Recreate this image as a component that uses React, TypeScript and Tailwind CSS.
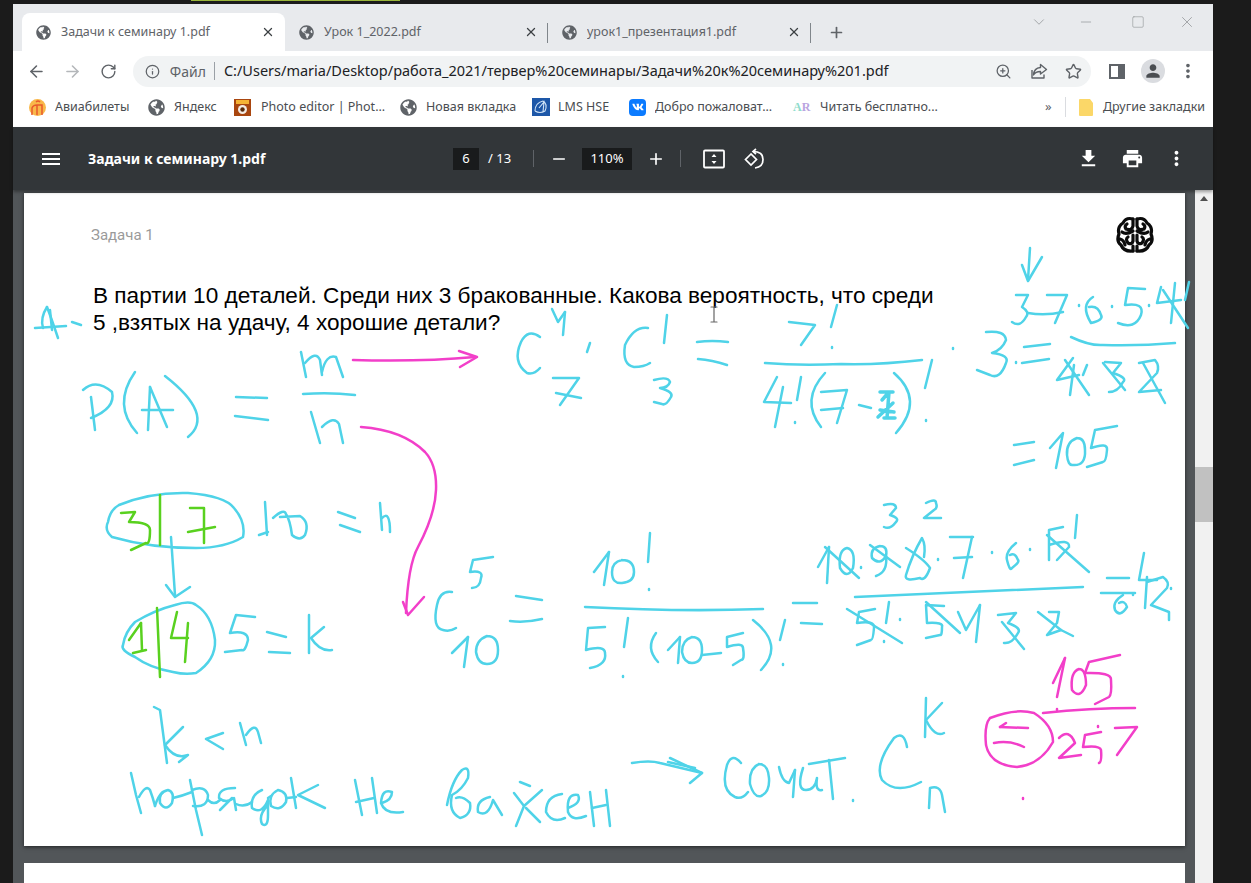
import React from 'react';
import { ArrowLeft, ArrowRight, RotateCw, Info, ZoomIn, Star, X, Plus, Minus, ChevronDown, Square } from 'lucide-react';
import { FaGlobeAmericas, FaVk } from 'react-icons/fa';
import { MdFileDownload, MdPrint, MdMoreVert, MdPerson, MdMenu } from 'react-icons/md';

const cyan = [
  // A-
  'M47 307 Q40 318 43 328', 'M47 307 Q52 320 58 338', 'M50 310 L52 330', 'M35 328 L66 326', 'M72 322 L81 325',
  // P(A) =
  'M91 397 L95 430', 'M83 390 Q96 378 112 392 Q116 408 91 418', 'M135 372 Q112 405 137 433',
  'M150 387 L148 430', 'M150 387 L167 427', 'M142 410 L173 410', 'M165 376 Q215 415 188 437',
  'M236 397 L267 398', 'M235 416 L268 420',
  // m/n
  'M301 352 L306 377', 'M305 363 Q316 350 320 360 L322 375', 'M322 372 Q326 354 336 357 L343 377',
  'M303 394 Q330 392 355 395', 'M311 412 L320 443', 'M322 427 Q334 415 339 424 L343 443',
  // C 4 7
  'M540 337 Q528 328 521 342 Q512 362 527 373 Q534 375 540 368',
  'M552 309 L558 322 L565 312', 'M565 312 L563 335',
  'M553 378 L579 378 L560 405', 'M556 393 L581 398', 'M590 343 L587 352',
  // C 1 3 =
  'M648 328 Q634 326 625 345 Q622 365 634 367 Q644 367 650 363', 'M667 315 L664 343',
  'M654 380 Q668 376 670 382 Q668 388 660 388 Q674 392 671 397 Q666 406 662 404 L654 402',
  'M697 342 Q712 340 728 342', 'M698 359 Q712 360 727 365',
  // 7! / 4!(7-4)!
  'M789 322 L815 325 L801 345', 'M837 305 L831 327', 'M832 347 L832 348',
  'M765 363 Q800 366 841 364 Q880 365 922 360', 'M932 360 L925 388', 'M926 420 L926 421',
  'M777 377 L764 402 L791 403', 'M783 387 L775 427', 'M801 377 L797 400', 'M795 422 L795 423',
  'M825 373 Q800 400 821 427', 'M821 392 L847 390 L837 423', 'M821 410 L843 408', 'M859 405 L871 408',
  'M894 373 Q925 400 896 433', 'M953 348 L953 349',
  // 3 =
  'M986 332 Q1005 330 1006 340 Q1002 350 992 353 Q1010 355 1006 363 Q1000 380 990 375 L977 370',
  'M1024 347 L1050 344', 'M1022 363 L1049 359', 'M1016 362 L1016 363',
  // arrow
  'M1030 248 L1028 280', 'M1022 265 L1028 281 L1042 257',
  // numerator
  'M1016 295 L1028 295 L1022 307 Q1030 312 1026 317 Q1020 328 1012 322',
  'M1047 295 L1067 295 L1055 323', 'M1028 313 Q1045 316 1063 312', 'M1079 305 L1079 306',
  'M1093 297 Q1080 305 1091 323 Q1104 320 1101 315 Q1098 305 1089 307', 'M1112 306 L1112 307',
  'M1145 289 L1128 288 L1125 305 Q1145 302 1141 315 Q1135 330 1118 323', 'M1149 305 L1149 306',
  'M1161 287 L1157 303 L1181 300', 'M1175 283 L1171 323', 'M1163 290 L1188 328', 'M1189 282 L1185 300',
  'M1071 337 Q1090 346 1103 345 Q1140 346 1175 343',
  // denominator
  'M1073 358 L1057 380 L1079 375', 'M1074 365 L1070 395', 'M1065 360 L1089 395', 'M1087 365 L1083 375',
  'M1105 362 L1121 363 L1113 373 Q1128 378 1123 382 Q1118 392 1109 392', 'M1103 363 L1125 390',
  'M1139 363 L1155 360 Q1160 366 1157 373 L1139 392 L1161 390', 'M1143 363 L1165 403',
  // =105
  'M1014 445 L1034 442', 'M1014 465 L1034 460', 'M1050 448 L1063 433 L1056 468',
  'M1077 438 Q1066 442 1067 455 Q1068 466 1073 465 Q1086 466 1085 450 Q1085 438 1077 438',
  'M1117 426 L1095 430 L1091 448 Q1108 442 1107 450 Q1106 462 1103 462 L1087 467',
  // 10 = n
  'M119 505 Q150 492 188 493 Q225 496 234 508 Q246 522 243 537 Q225 548 196 548 Q150 548 112 537 Q104 530 108 522 Q110 510 119 505',
  'M265 502 L267 535', 'M259 535 L268 532', 'M273 518 Q284 508 286 514 Q290 520 292 535 Q300 542 305 535 Q310 522 300 516 L280 517',
  'M338 512 L355 518', 'M340 525 L360 532', 'M380 503 L382 530', 'M382 518 Q390 510 390 532',
  'M171 537 L175 595', 'M166 585 L175 597 L190 587',
  // 5 = k
  'M175 605 Q190 600 196 605 Q212 615 215 640 Q216 660 196 673 Q185 675 173 672 Q150 668 135 657 Q120 650 123 645 Q125 632 135 622 Q155 610 175 605',
  'M255 617 L236 615 L230 633 Q248 630 248 640 Q245 652 242 650 L225 652', 'M267 632 L286 637', 'M269 652 L290 653',
  'M309 615 L309 653', 'M324 627 L311 638 Q320 652 332 650',
  // C 5 10
  'M452 592 Q440 590 437 605 Q432 628 443 630 Q450 632 456 628',
  'M493 557 L473 560 L470 572 Q484 570 481 578 Q480 588 472 588',
  'M468 637 L452 653', 'M468 637 L464 667', 'M487 636 Q476 640 476 652 Q478 664 487 664 Q498 664 498 650 Q498 636 487 636',
  'M516 596 L542 600', 'M510 621 Q525 623 542 619',
  // 10!/5!(10-5)!
  'M609 552 L594 572', 'M609 552 L604 585', 'M622 560 Q612 562 612 572 Q612 584 622 583 Q634 582 634 572 Q634 560 622 560',
  'M650 533 L648 562', 'M649 589 L649 590', 'M585 607 Q680 612 763 609',
  'M605 627 L588 628 L586 650 Q605 645 605 653 Q607 665 590 668', 'M628 618 L624 647', 'M623 676 L623 677',
  'M656 633 Q645 648 658 662', 'M680 637 L668 650', 'M680 637 L678 663',
  'M692 637 Q682 640 682 652 Q684 663 692 663 Q702 663 702 650 Q702 637 692 637', 'M702 655 L721 653',
  'M743 633 L727 637 L727 647 Q743 642 743 648 Q745 660 741 660 L733 665',
  'M753 620 Q785 645 761 670', 'M785 620 L780 640', 'M783 664 L783 665',
  'M793 603 L817 603', 'M801 623 L822 624',
  // big numerator
  'M884 505 Q896 502 896 508 L890 515 Q900 518 896 522 Q890 530 884 527',
  'M926 503 Q936 498 936 503 Q938 508 934 510 L924 518 L941 518',
  'M829 547 L818 567', 'M829 547 L827 583', 'M847 548 Q838 550 840 568 Q847 580 853 568 Q856 550 847 548', 'M825 547 L859 578', 'M861 567 L861 568',
  'M880 546 Q870 548 872 558 Q880 566 886 556 Q888 546 880 546', 'M886 556 Q888 572 876 576', 'M870 545 L900 567',
  'M906 548 Q925 560 930 568 Q925 582 920 578 Q904 582 906 575 Q912 555 922 538 Q926 545 924 557', 'M938 559 L938 560',
  'M950 537 L973 537', 'M972 537 L963 578', 'M954 558 L972 557', 'M992 552 L992 553',
  'M1016 543 Q1005 552 1007 560 Q1010 572 1012 568 Q1020 562 1018 560 Q1015 552 1010 555', 'M1030 549 L1030 550',
  'M1063 527 L1049 530 L1049 560 M1049 545 Q1070 538 1069 547 L1057 560', 'M1047 535 L1089 572', 'M1077 515 L1075 538',
  'M1107 578 L1129 578', 'M1101 593 L1135 593', 'M1123 595 Q1112 602 1115 610 Q1120 618 1127 607 Q1125 600 1119 603', 'M1133 594 L1133 595',
  'M1144 553 L1139 580 L1157 580', 'M1147 577 L1145 608', 'M1147 582 L1163 577 Q1170 582 1167 588 L1151 605 L1169 612 L1169 620', 'M1171 588 L1171 589',
  'M855 597 Q960 592 1083 587',
  // big denominator
  'M875 609 L859 612 L857 623 Q875 620 874 628 Q873 640 871 640 L857 645', 'M847 609 L902 643', 'M889 602 L886 623', 'M900 619 L900 620', 'M884 641 L884 642',
  'M944 606 L926 605 L927 623 Q944 622 942 627 Q942 636 940 635 L926 638', 'M926 602 L960 633', 'M958 612 L966 630 L980 605', 'M980 605 L976 642',
  'M998 615 L1016 613 L1008 623 Q1022 628 1018 633 Q1012 644 1004 643', 'M1002 622 L1024 649',
  'M1049 612 L1059 612 L1057 623 L1047 635 L1061 630 L1073 636', 'M1038 612 L1061 630',
  // k < n
  'M154 707 L160 710 L167 763', 'M183 727 L165 745 Q175 760 188 755 L179 762', 'M223 733 L206 739 L223 749',
  'M240 723 L246 745', 'M246 735 Q255 722 258 732 L261 743',
  // порядок не важен
  'M131 773 L136 795 L141 813', 'M139 797 Q146 784 150 790 Q153 798 155 806',
  'M168 790 Q158 792 160 803 Q166 812 172 803 Q175 792 168 790',
  'M190 780 L196 810 L202 835', 'M192 790 Q205 785 208 795 Q208 808 193 806',
  'M235 788 Q218 788 219 798 Q226 804 234 798 L236 810 M232 798 L220 810',
  'M262 790 Q250 795 252 808 Q262 815 268 800 L268 815 Q268 828 262 824 Q258 815 268 805',
  'M278 790 Q268 795 271 806 Q280 812 286 802 Q288 792 278 790',
  'M291 778 L296 808', 'M318 785 L298 795 L325 808',
  'M155 806 Q158 796 163 792', 'M173 798 Q182 796 192 792', 'M208 800 Q214 806 220 800', 'M236 804 Q244 808 252 802', 'M268 798 L271 796', 'M287 798 L296 797',
  'M355 780 L362 815', 'M356 802 L374 798', 'M372 778 L377 813', 'M382 803 Q392 800 392 792 Q382 788 381 803 Q385 815 403 812',
  'M447 805 Q452 780 462 770 Q470 765 468 778 Q462 790 452 795 Q448 812 460 818 Q472 815 470 803 Q462 795 456 798',
  'M490 797 Q476 800 478 812 Q488 818 493 800 L502 815',
  'M514 793 L524 806 L516 826', 'M524 806 L542 790 M526 808 L540 822', 'M520 782 L530 786',
  'M562 794 Q546 796 546 812 Q552 824 565 818',
  'M568 808 Q582 803 578 795 Q566 793 568 812 Q572 822 586 816',
  'M590 792 L594 826', 'M592 808 L606 805', 'M606 790 L610 826',
  // стрелка, сочет.
  'M632 763 Q650 760 660 763 L702 773', 'M670 758 L702 773 L690 783', 'M668 762 L695 768',
  'M741 763 Q732 752 727 765 Q720 790 735 797 Q742 800 748 792',
  'M759 764 Q749 768 750 784 Q754 798 761 796 Q770 792 769 778 Q768 764 759 764',
  'M779 767 Q782 782 789 783 L795 770', 'M795 770 L793 797',
  'M803 768 Q796 790 806 790 Q815 790 817 778 Q815 792 822 790',
  'M809 764 L845 758', 'M829 760 L833 799', 'M853 800 L853 801',
  'M907 747 Q904 730 894 738 Q874 765 882 780 Q896 795 921 782',
  'M926 698 L925 737', 'M942 703 L926 720 Q935 738 944 733',
  'M929 808 L930 788 Q940 785 942 795 L945 812',
];

const green = [
  'M160 495 L160 545', 'M121 513 L135 512 L129 522 Q150 522 150 530 Q150 545 146 543 L131 550',
  'M190 508 L204 508 L204 543', 'M188 532 L215 527',
  'M157 608 L160 677', 'M141 623 L129 640', 'M141 623 L142 650', 'M133 653 L146 650',
  'M177 612 L171 638 L188 638', 'M188 623 L185 662',
];

const magenta = [
  'M353 360 Q420 362 475 357', 'M459 351 L477 357 L460 367',
  'M361 427 Q403 430 425 452 Q437 465 436 490 Q435 515 418 547 Q408 565 406 613',
  'M403 602 L408 615 L424 597',
  'M1065 658 L1053 683', 'M1065 658 L1057 697',
  'M1079 669 Q1070 672 1072 690 Q1080 700 1086 685 Q1086 669 1079 669',
  'M1120 655 L1089 662 L1085 673 Q1112 672 1111 680 Q1112 695 1109 697 L1095 704',
  'M1043 713 Q1090 708 1135 708', 'M1057 709 L1057 710',
  'M990 718 Q1015 708 1034 713 Q1053 725 1053 742 Q1040 765 1017 767 Q990 765 986 745 Q984 725 990 718',
  'M1000 727 L1028 728', 'M994 743 Q1010 740 1024 747', 'M1000 727 L1006 723',
  'M1059 738 Q1069 728 1075 743 L1059 758 L1081 755',
  'M1101 732 L1085 735 L1083 747 Q1100 745 1101 750 Q1102 762 1099 763',
  'M1115 728 L1137 727 L1117 755', 'M1098 726 L1098 727', 'M1023 798 L1023 799',
];

function Handwriting() {
  return (
    <svg
      className="absolute inset-0 overflow-visible"
      width="1161"
      height="653"
      viewBox="24 193 1161 653"
      fill="none"
      strokeLinecap="round"
      strokeLinejoin="round"
    >
      <g stroke="#4fd3e8" strokeWidth="2.5">
        {cyan.map((d) => <path key={d} d={d} />)}
        <path d="M880 392 L893 392 M884 418 L895 418 M882 400 L889 392 L887 418 M880 410 L894 412 M878 417 L893 403" strokeWidth="3.5" />
      </g>
      <g stroke="#59d11f" strokeWidth="2.5">
        {green.map((d) => <path key={d} d={d} />)}
      </g>
      <g stroke="#f23fc9" strokeWidth="2.5">
        {magenta.map((d) => <path key={d} d={d} />)}
      </g>
      <path d="M711 307 H717 M714 307 V322 M711 322 H717" stroke="#666" strokeWidth="1.2" />
    </svg>
  );
}

const brainHalf = (
  <g stroke="#0b0b0b" strokeWidth="3.2" strokeLinecap="round" strokeLinejoin="round" fill="none">
    <path d="M17 3 Q10 1 7 7 Q1 11 3 18 Q0 25 5 29 Q8 36 17 35" />
    <path d="M17 3 V10 Q16 15 10 13 Q8 10 11 8" />
    <path d="M17 15 Q10 19 6 16" />
    <path d="M17 19 V25 Q16 29 12 27 Q9 23 12 21" />
    <path d="M17 30 V35" />
    <path d="M4 23 Q8 24 9 29" />
  </g>
);

function BrainLogo() {
  return (
    <svg width="38" height="38" viewBox="0 0 38 38" fill="none">
      {brainHalf}
      <g transform="translate(38 0) scale(-1 1)">{brainHalf}</g>
    </svg>
  );
}

function Tab({ title, active, divider }: { title: string; active?: boolean; divider?: boolean }) {
  return (
    <div className={`relative flex h-[38px] w-[263px] items-center rounded-t-lg pl-[14px] pr-[10px] ${active ? 'bg-white' : ''}`}>
      <FaGlobeAmericas className="h-[15px] w-[15px] shrink-0 text-[#5f6368]" />
      <span className="ml-[10px] flex-1 truncate text-[12.5px] text-[#5f6368]">{title}</span>
      <X className="h-[14px] w-[14px] text-[#3c4043]" strokeWidth={2.2} />
      {divider && <span className="absolute right-0 top-[10px] h-[20px] w-px bg-[#80868b]" />}
    </div>
  );
}

function Bookmark({ icon, label, className }: { icon: React.ReactNode; label: string; className: string }) {
  return (
    <div className={`flex items-center ${className}`}>
      {icon}
      <span className="truncate text-[12.5px] text-[#4a4d51]">{label}</span>
    </div>
  );
}

const globe = <FaGlobeAmericas className="mr-[9px] h-[17px] w-[17px] shrink-0 text-[#5f6368]" />;

export default function App() {
  return (
    <div className="flex h-[883px] w-[1251px] flex-col overflow-hidden bg-[#1b1b1b] pl-[13px] pr-[38px] font-['Noto_Sans',sans-serif]">
      <div className="h-[4px] shrink-0">
        <div className="ml-[178px] h-px w-[209px] bg-[#9ab53a]" />
      </div>

      <div className="flex min-h-0 flex-1 flex-col">
        {/* tab strip */}
        <div className="flex h-[47px] shrink-0 items-end bg-[#e8eaed] pl-[9px]">
          <Tab title="Задачи к семинару 1.pdf" active />
          <Tab title="Урок 1_2022.pdf" divider />
          <Tab title="урок1_презентация1.pdf" divider />
          <div className="flex h-[38px] items-center pl-[17px]">
            <Plus className="h-[17px] w-[17px] text-[#5f6368]" strokeWidth={2.4} />
          </div>
          <div className="ml-auto flex h-[38px] -translate-y-[10px] items-center pr-[17px] text-[#8d9093]">
            <ChevronDown className="h-[18px] w-[18px]" strokeWidth={1} />
            <Minus className="ml-[30px] h-[16px] w-[16px]" strokeWidth={1} />
            <Square className="ml-[37px] h-[14px] w-[14px]" strokeWidth={1} />
            <X className="ml-[33px] h-[18px] w-[18px]" strokeWidth={1} />
          </div>
        </div>

        {/* address row */}
        <div className="flex h-[40px] shrink-0 items-center bg-white pl-[14px] pr-[14px]">
          <ArrowLeft className="h-[19px] w-[19px] text-[#5f6368]" strokeWidth={2} />
          <ArrowRight className="ml-[17px] h-[19px] w-[19px] text-[#b4b7ba]" strokeWidth={2} />
          <RotateCw className="ml-[18px] h-[17px] w-[17px] text-[#5f6368]" strokeWidth={2} />
          <div className="ml-[16px] flex h-[31px] w-[962px] items-center rounded-full bg-[#f1f3f4] pl-[12px] pr-[9px]">
            <Info className="h-[15px] w-[15px] text-[#5f6368]" strokeWidth={2} />
            <span className="ml-[10px] text-[14px] text-[#5f6368]">Файл</span>
            <span className="ml-[8px] h-[18px] w-px bg-[#9aa0a6]" />
            <span className="ml-[9px] text-[14.5px] text-[#202124]">C:/Users/maria/Desktop/работа_2021/тервер%20семинары/Задачи%20к%20семинару%201.pdf</span>
            <ZoomIn className="ml-auto h-[17px] w-[17px] text-[#5f6368]" strokeWidth={1.8} />
            <svg className="ml-[18px] h-[18px] w-[18px] text-[#5f6368]" viewBox="0 0 18 18" fill="none" stroke="currentColor" strokeWidth="1.4" strokeLinejoin="round">
              <path d="M10.5 2.5 L16.5 7.5 L10.5 12 V9.5 Q5.5 9.5 3.5 13 Q4 6 10.5 5.5 Z" />
              <path d="M2 8 V16 H14 V12.5" />
            </svg>
            <Star className="ml-[17px] h-[17px] w-[17px] text-[#5f6368]" strokeWidth={2} />
          </div>
          <div className="ml-[18px] flex h-[15px] w-[16px] border-2 border-[#5f6368]">
            <div className="ml-auto h-full w-[5px] bg-[#5f6368]" />
          </div>
          <div className="ml-[16px] flex h-[24px] w-[24px] items-center justify-center rounded-full bg-[#dadce0]">
            <MdPerson className="h-[20px] w-[20px] text-[#4a4d51]" />
          </div>
          <MdMoreVert className="ml-[12px] h-[22px] w-[22px] text-[#5f6368]" />
        </div>

        {/* bookmarks */}
        <div className="flex h-[36px] shrink-0 items-center bg-white pb-[4px] pl-[16px] text-[#4a4d51]">
          <Bookmark
            className="w-[119px]"
            label="Авиабилеты"
            icon={
              <svg className="mr-[9px] h-[17px] w-[17px] shrink-0" viewBox="0 0 17 17">
                <circle cx="8.5" cy="8.5" r="8.5" fill="#f9b84a" />
                <path d="M3 16 V9 Q4 6 8 6 H13 V16 M8 6 V16 M7 3 Q9 1 11 3" fill="none" stroke="#e85a2c" strokeWidth="1.5" />
              </svg>
            }
          />
          <Bookmark className="w-[86px]" label="Яндекс" icon={globe} />
          <Bookmark
            className="w-[166px]"
            label="Photo editor | Phot..."
            icon={
              <svg className="mr-[10px] h-[17px] w-[17px] shrink-0" viewBox="0 0 17 17">
                <rect width="17" height="17" fill="#a9460f" />
                <rect x="2" y="1" width="13" height="4" fill="#f5b335" />
                <circle cx="8.5" cy="10.5" r="4.5" fill="#f4ece4" />
                <circle cx="8.5" cy="10.5" r="2.2" fill="#5a2a0a" />
              </svg>
            }
          />
          <Bookmark className="w-[132px]" label="Новая вкладка" icon={globe} />
          <Bookmark
            className="w-[97px]"
            label="LMS HSE"
            icon={
              <svg className="mr-[8px] h-[18px] w-[18px] shrink-0" viewBox="0 0 18 18" fill="none">
                <rect width="18" height="18" fill="#1d57a8" />
                <path d="M3 13 Q3 5 11 3 Q16 6 13 13 Q8 16 3 13 M7 10 L12 4 L11 14" stroke="#cfe3f7" strokeWidth="1.1" />
              </svg>
            }
          />
          <Bookmark
            className="w-[164px]"
            label="Добро пожаловат..."
            icon={
              <div className="mr-[9px] flex h-[17px] w-[17px] shrink-0 items-center justify-center rounded-[4px] bg-[#0b7bff] text-white">
                <FaVk className="h-[12px] w-[12px]" />
              </div>
            }
          />
          <Bookmark
            className="w-[252px]"
            label="Читать бесплатно..."
            icon={
              <span className="mr-[10px] w-[17px] shrink-0 font-['Liberation_Serif',serif] text-[12px] font-bold">
                <span className="text-[#8fdccb]">A</span>
                <span className="text-[#b9a4e0]">R</span>
              </span>
            }
          />
          <span className="w-[16px] text-[13px] text-[#5f6368]">»</span>
          <span className="ml-[4px] h-[20px] w-px bg-[#dadce0]" />
          <svg className="ml-[13px] h-[17px] w-[14px] shrink-0" viewBox="0 0 14 17">
            <path d="M0 1 Q0 0 1 0 H11 L14 4 V16 Q14 17 13 17 H1 Q0 17 0 16 Z" fill="#fbd768" />
          </svg>
          <span className="ml-[10px] whitespace-nowrap text-[12.5px]">Другие закладки</span>
        </div>

        {/* pdf toolbar */}
        <div className="relative z-10 flex h-[63px] shrink-0 items-center bg-[#323639] pl-[26px] text-white shadow-[0_2px_3px_rgba(0,0,0,0.35)]">
          <MdMenu className="h-[24px] w-[24px]" />
          <div className="ml-[25px] w-[365px] truncate text-[14px] font-bold">Задачи к семинару 1.pdf</div>
          <div className="flex h-[22px] w-[26px] items-center justify-center bg-[#191b1c] text-[13px]">6</div>
          <span className="ml-[9px] w-[45px] text-[13px]">/ 13</span>
          <span className="h-[17px] w-px bg-[#5f6368]" />
          <Minus className="ml-[16px] h-[18px] w-[18px]" strokeWidth={2.2} />
          <div className="ml-[14px] flex h-[22px] w-[50px] items-center justify-center bg-[#191b1c] text-[13px]">110%</div>
          <Plus className="ml-[15px] h-[18px] w-[18px]" strokeWidth={2.2} />
          <span className="ml-[15px] h-[17px] w-px bg-[#5f6368]" />
          <svg className="ml-[22px] h-[20px] w-[22px]" viewBox="0 0 22 20" fill="none" stroke="#fff" strokeWidth="1.8">
            <rect x="1" y="1.5" width="20" height="17" rx="1" />
            <path d="M11 5 L13.5 8 H8.5 Z M11 15 L13.5 12 H8.5 Z" fill="#fff" stroke="none" />
          </svg>
          <svg className="ml-[18px] h-[22px] w-[22px]" viewBox="0 0 22 22" fill="none" stroke="#fff" strokeWidth="1.7">
            <path d="M8 6 L2.5 11.5 L8 17 L13.5 11.5 Z" />
            <path d="M10 3.5 Q20 3.5 20 11.5 Q20 19 12 20" />
            <path d="M13 1 L10 3.5 L13 6" />
          </svg>
          <MdFileDownload className="ml-[312px] h-[23px] w-[23px]" />
          <MdPrint className="ml-[21px] h-[23px] w-[23px]" />
          <MdMoreVert className="ml-[21px] h-[23px] w-[23px]" />
        </div>

        {/* viewer */}
        <div className="flex min-h-0 flex-1">
          <div className="min-w-0 flex-1 overflow-hidden bg-[#525659] pl-[11px] pr-[8px] pt-[3px]">
            <div className="relative h-[653px] w-[1161px] bg-white shadow-[0_1px_4px_rgba(0,0,0,0.6)]">
              <div className="flex items-center justify-between pl-[67px] pr-[31px] pt-[23px]">
                <span className="font-['Roboto',sans-serif] text-[15px] text-[#9a9a9a]">Задача 1</span>
                <BrainLogo />
              </div>
              <p className="ml-[69px] mt-[28px] w-[850px] font-['Liberation_Sans',sans-serif] text-[22.6px] leading-[27px] text-black">
                В партии 10 деталей. Среди них 3 бракованные. Какова вероятность, что среди 5 ,взятых на удачу, 4 хорошие детали?
              </p>
              <Handwriting />
            </div>
            <div className="mt-[17px] h-[200px] w-[1161px] bg-white" />
          </div>

          {/* scrollbar */}
          <div className="flex w-[18px] shrink-0 flex-col bg-[#f1f1f1]">
            <div className="flex h-[17px] items-center justify-center">
              <div className="h-0 w-0 border-x-[4px] border-b-[5px] border-x-transparent border-b-[#505050]" />
            </div>
            <div className="mt-[260px] h-[55px] bg-[#c1c1c1]" />
          </div>
        </div>
      </div>
    </div>
  );
}
